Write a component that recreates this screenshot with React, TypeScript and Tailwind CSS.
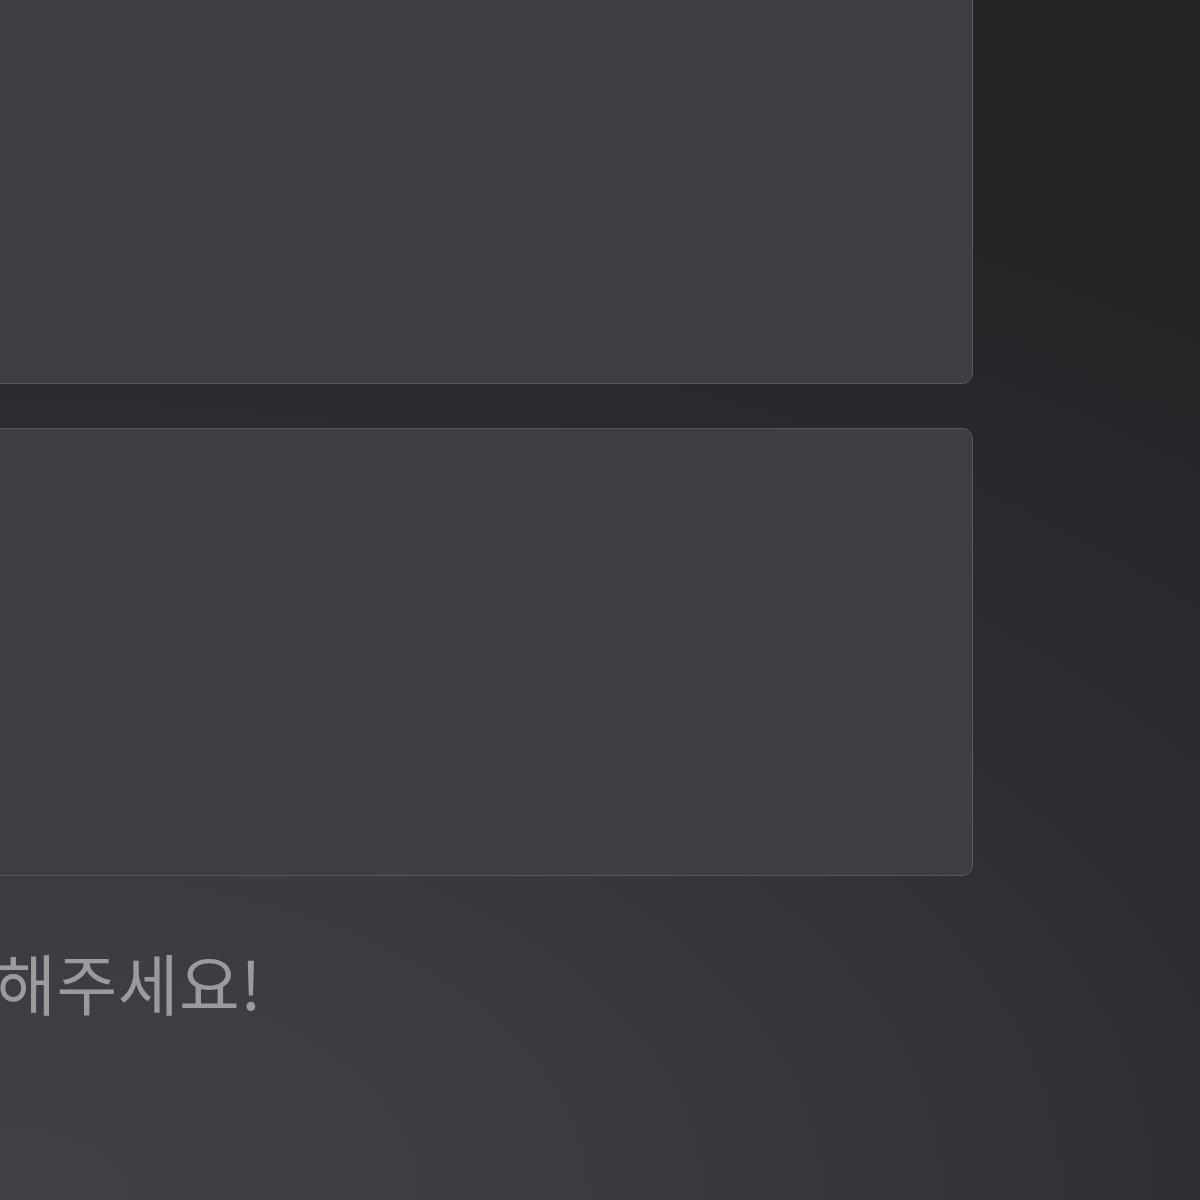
export default function App() {
  return (
    <div
      className="relative h-[1200px] w-[1200px] overflow-hidden bg-[radial-gradient(1600px_900px_at_0%_100%,#414148_0%,#3a3a40_40%,#2c2b30_85%,#252528_125%)]"
      style={{ fontFamily: '"Noto Sans CJK KR", "Noto Sans", sans-serif' }}
    >
      <div className="ml-[-40px] mt-[-64px] flex w-[1013px] flex-col">
        <div className="h-[448px] rounded-[11px] border border-[#5a595f] bg-[#3e3d43]" />
        <div className="mt-[44px] h-[448px] rounded-[11px] border border-[#5a595f] bg-[#3e3d43]" />
        <div className="mt-[72px] flex w-[302px] justify-end whitespace-nowrap text-[66px] font-normal leading-none tracking-[0.5px] text-[#9a9a9f]">
          내용을 입력해주세요!
        </div>
      </div>
    </div>
  );
}
